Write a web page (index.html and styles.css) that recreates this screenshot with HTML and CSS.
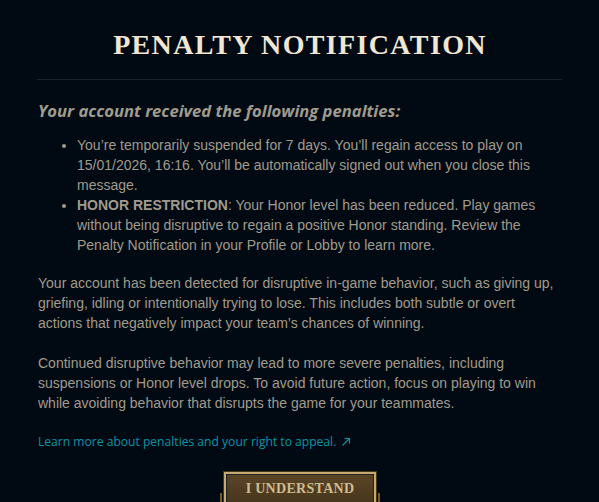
FILE: index.html
```html
<!DOCTYPE html>
<html>
<head>
<meta charset="utf-8">
<link rel="stylesheet" href="styles.css">
</head>
<body>
<div class="modal">
  <h1 class="title">PENALTY NOTIFICATION</h1>
  <div class="divider"></div>
  <h2 class="subtitle">Your account received the following penalties:</h2>
  <ul class="penalties">
    <li>You’re temporarily suspended for 7 days. You’ll regain access to play on 15/01/2026, 16:16. You’ll be automatically signed out when you close this message.</li>
    <li><strong>HONOR RESTRICTION</strong>: Your Honor level has been reduced. Play games without being disruptive to regain a positive Honor standing. Review the Penalty Notification in your Profile or Lobby to learn more.</li>
  </ul>
  <p class="para">Your account has been detected for disruptive in-game behavior, such as giving up, griefing, idling or intentionally trying to lose. This includes both subtle or overt actions that negatively impact your team’s chances of winning.</p>
  <p class="para">Continued disruptive behavior may lead to more severe penalties, including suspensions or Honor level drops. To avoid future action, focus on playing to win while avoiding behavior that disrupts the game for your teammates.</p>
  <a class="link" href="#">Learn more about penalties and your right to appeal. <svg class="ext" width="10" height="10" viewBox="0 0 10 10"><path d="M1.5 8.5 L8.5 1.5 M3.5 1.5 H8.5 V6.5" fill="none" stroke="currentColor" stroke-width="1.1"/></svg></a>
  <div class="actions">
    <div class="btn-wrap">
      <span class="deco deco-left"></span>
      <button class="btn">I UNDERSTAND</button>
      <span class="deco deco-right"></span>
    </div>
  </div>
</div>
</body>
</html>
```
FILE: styles.css
```css
html, body {
  margin: 0;
  padding: 0;
  background: #010a13;
  height: 100%;
  overflow: hidden;
}
.modal {
  padding: 28px 37px 0 38px;
  font-family: "Liberation Sans", Arial, sans-serif;
  color: #a09b8c;
}
.title {
  margin: 0;
  text-align: center;
  font-family: "Liberation Serif", "DejaVu Serif", serif;
  font-weight: 700;
  font-size: 28px;
  line-height: 34px;
  letter-spacing: 1.35px;
  color: #f0e6d2;
}
.divider {
  height: 1px;
  background: #1e2328;
  margin-top: 17px;
  margin-left: -1px;
}
.subtitle {
  margin: 19px 0 0;
  font-family: "Open Sans", "Noto Sans", sans-serif;
  font-style: italic;
  font-weight: 700;
  font-size: 16.6px;
  line-height: 24px;
  color: #a09b8c;
}
.penalties {
  margin: 12px 0 0;
  padding-left: 39px;
  padding-right: 20px;
  font-size: 14px;
  line-height: 20px;
}
.penalties strong {
  font-weight: 700;
}
.para {
  margin: 18px 0 0;
  font-size: 14px;
  line-height: 20px;
}
.para + .para {
  margin-top: 20px;
}
.link {
  display: inline-flex;
  align-items: center;
  gap: 5px;
  margin-top: 21px;
  font-family: "Open Sans", "Noto Sans", sans-serif;
  font-size: 12.1px;
  line-height: 16px;
  color: #0a94a8;
  text-decoration: none;
}
.ext {
  display: block;
}
.actions {
  display: flex;
  justify-content: center;
  margin-top: 22px;
}
.btn-wrap {
  position: relative;
}
.btn {
  display: block;
  width: 152px;
  height: 34px;
  padding: 0;
  border: 2px solid #c8aa6e;
  outline: 1px solid #463714;
  box-shadow: inset 0 0 0 1px #1e2328;
  background: linear-gradient(180deg, #5b4526 0%, #46361c 100%);
  color: #cdbe91;
  font-family: "Liberation Serif", "DejaVu Serif", serif;
  font-weight: 700;
  font-size: 14px;
  letter-spacing: 0.3px;
}
.deco {
  position: absolute;
  top: 21px;
  width: 2px;
  height: 20px;
  background: #785a28;
}
.deco-left { left: -4px; }
.deco-right { right: -4px; }
```
